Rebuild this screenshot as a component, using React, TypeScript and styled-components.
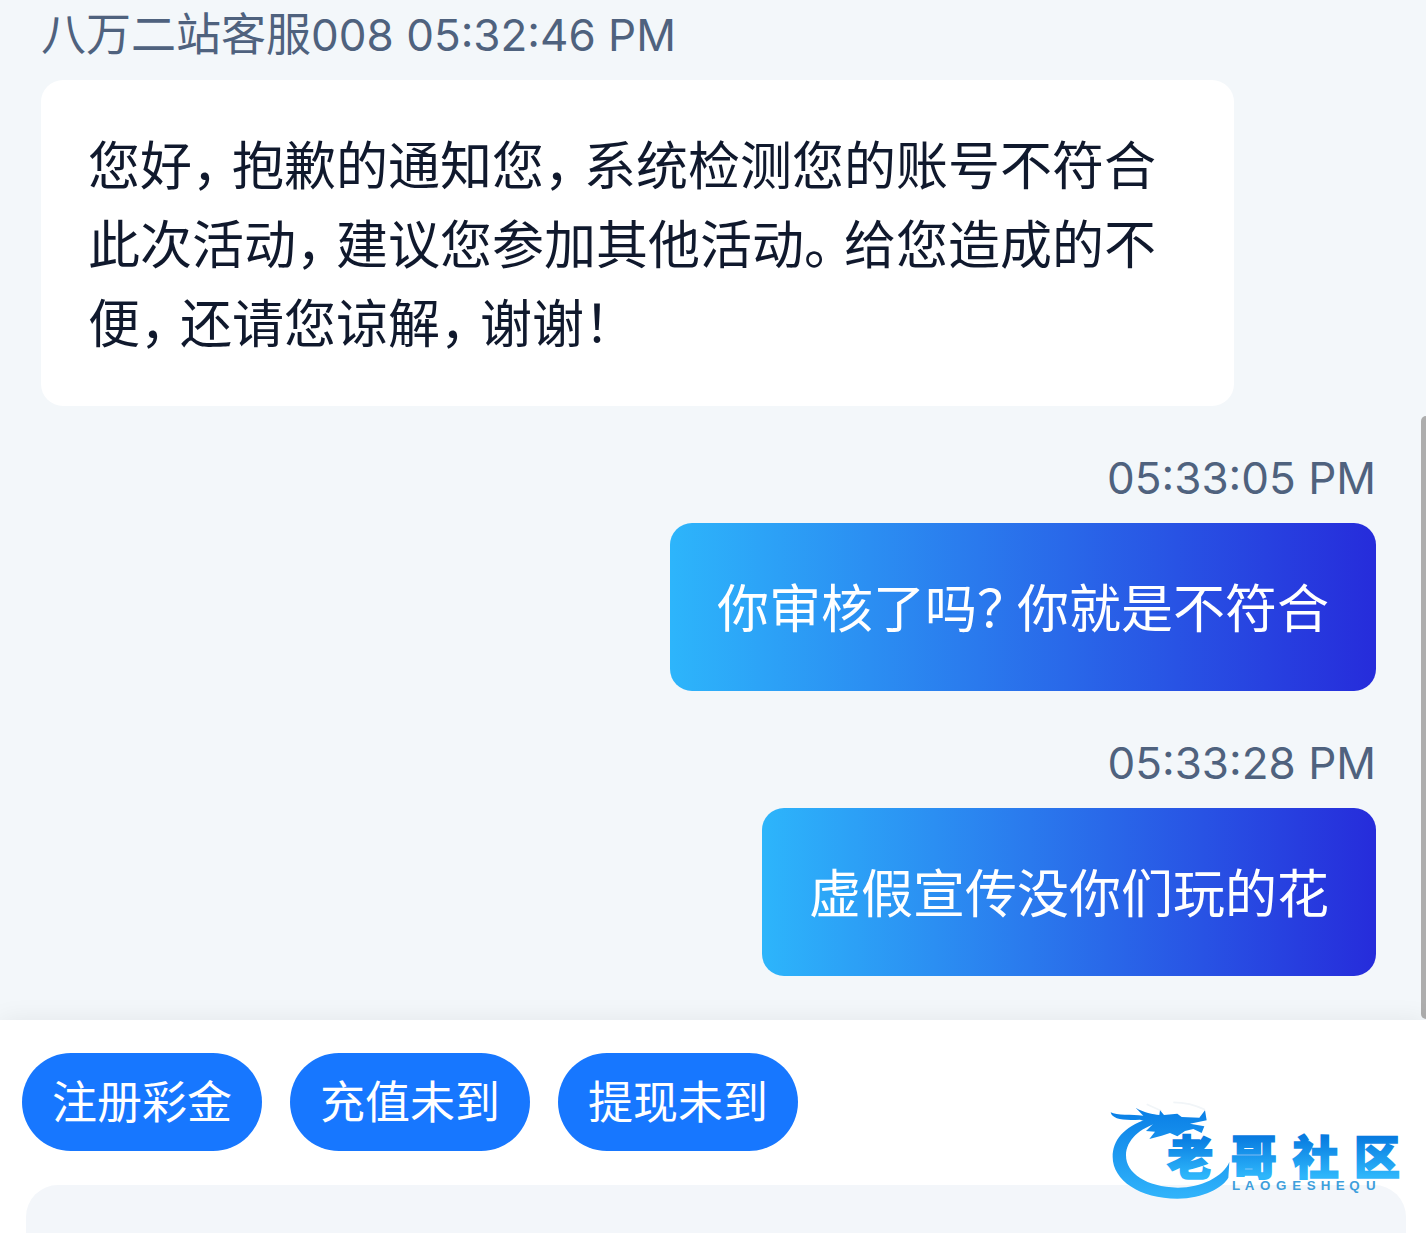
import React from 'react';
import styled, { createGlobalStyle } from 'styled-components';

const GlobalStyle = createGlobalStyle`
  *, *::before, *::after { box-sizing: border-box; }
  body {
    margin: 0;
    background: #f3f7fa;
    font-family: "Noto Sans CJK SC", sans-serif;
  }
`;

const Page = styled.div`
  position: relative;
  display: flex;
  flex-direction: column;
  height: 100vh;
  overflow: hidden;
`;

const Conversation = styled.main`
  position: relative;
  display: flex;
  flex-direction: column;
  flex: none;
  gap: 39px;
  padding: 2px 50px 44px 41px;
  background: #f3f7fa;
`;

const Message = styled.article<{ $own?: boolean }>`
  display: flex;
  flex-direction: column;
  align-items: ${(p) => (p.$own ? 'flex-end' : 'flex-start')};
  gap: 18px;
`;

const Meta = styled.header`
  font-size: 45px;
  line-height: 60px;
  color: #4f627e;
`;

const Latin = styled.span`
  font-family: Inter, sans-serif;
  font-size: 44px;
  line-height: 44px;
`;

const Bubble = styled.p<{ $own?: boolean }>`
  margin: 0;
  max-width: calc(100% - 142px);
  padding: 43px 47px 46px;
  border-radius: 22px;
  font-size: 52px;
  line-height: 79px;
  color: ${(p) => (p.$own ? '#fff' : '#10192d')};
  background: ${(p) => (p.$own ? 'linear-gradient(90deg, #2db5fb, #262cdb)' : '#fff')};
`;

const Mark = styled.span`
  margin-right: 14px;
  font-feature-settings: "halt";
`;

const ScrollThumb = styled.div`
  position: absolute;
  right: 0;
  top: 416px;
  bottom: 1px;
  width: 5px;
  border-radius: 5px 0 0 5px;
  background: #adadad;
`;

const Composer = styled.footer`
  position: relative;
  display: flex;
  flex-direction: column;
  flex: 1;
  min-height: 0;
  gap: 34px;
  padding: 33px 20px 0 22px;
  background: #fff;
  box-shadow: 0 0 24px rgba(0, 0, 0, 0.07);
`;

const QuickReplies = styled.nav`
  display: flex;
  gap: 28px;
`;

const QuickReply = styled.button`
  height: 98px;
  padding: 0 30px 4px;
  border: 0;
  border-radius: 49px;
  background: #1777ff;
  color: #fff;
  font: 400 45px/64px "Noto Sans CJK SC", sans-serif;
`;

const MessageBox = styled.textarea`
  flex: none;
  height: 140px;
  margin-left: 4px;
  padding: 30px;
  border: 0;
  border-radius: 32px;
  outline: 0;
  resize: none;
  background: #f3f6fa;
  font: 400 45px/64px "Noto Sans CJK SC", sans-serif;
`;

const Brand = styled.svg`
  position: absolute;
  right: 21px;
  bottom: 33px;
  width: 295px;
  height: 103px;
`;

function withMarks(text: string) {
  return text
    .split(/([，。？！])/)
    .map((part, i) => (i % 2 ? <Mark key={i}>{part}</Mark> : part));
}

const messages = [
  { name: '八万二站客服', id: '008', time: '05:32:46 PM', text: '您好，抱歉的通知您，系统检测您的账号不符合此次活动，建议您参加其他活动。给您造成的不便，还请您谅解，谢谢！' },
  { own: true, time: '05:33:05 PM', text: '你审核了吗？你就是不符合' },
  { own: true, time: '05:33:28 PM', text: '虚假宣传没你们玩的花' },
];

const replies = ['注册彩金', '充值未到', '提现未到'];

function BrandMark() {
  return (
    <Brand viewBox="60 20 885 309" role="img" aria-label="老哥社区">
      <defs>
        <linearGradient id="ring" gradientUnits="userSpaceOnUse" x1="0" y1="60" x2="0" y2="325">
          <stop offset="0" stopColor="#0a7fe6" />
          <stop offset="1" stopColor="#31b4fb" />
        </linearGradient>
        <linearGradient id="word" gradientUnits="userSpaceOnUse" x1="0" y1="140" x2="0" y2="258">
          <stop offset="0" stopColor="#087be0" />
          <stop offset="1" stopColor="#2eb6fb" />
        </linearGradient>
      </defs>
      <path d="M170 42L215 62M250 36C290 36 320 46 345 58" fill="none" stroke="#f1f5f8" strokeWidth="5" />
      <g fill="url(#ring)">
        <path d="M172 86C100 110 68 150 68 200C68 270 150 325 262 325C340 325 400 290 415 262L418 215C400 260 330 293 262 292C170 290 108 250 108 195C108 150 150 112 205 98Z" />
        <path d="M62 66C80 76 125 72 160 76L137 52C160 66 190 72 208 74L210 60L222 74L262 70L275 80L328 82L345 60L350 90L300 100L343 108L335 128L310 116L285 122L262 138L240 128L215 136L178 146L195 124L168 122L190 100L150 88C100 92 66 86 62 66Z" />
      </g>
      <g fontFamily="'Noto Sans CJK SC', sans-serif" fontWeight="900" fill="url(#word)" stroke="url(#word)" strokeWidth="5">
        <text x="232 422 608 792" y="250" fontSize="138">老哥社区</text>
      </g>
      <text x="426 464 510 558 607 650 692 737 778 828" y="299" fontFamily="'Liberation Sans', sans-serif" fontWeight="700" fontSize="40" fill="#3f9fdc">LAOGESHEQU</text>
    </Brand>
  );
}

export default function App() {
  return (
    <>
      <GlobalStyle />
      <Page>
        <Conversation>
          {messages.map((m) => (
            <Message key={m.time} $own={m.own}>
              <Meta>{m.name}<Latin>{m.id ? `${m.id} ` : ''}<time>{m.time}</time></Latin></Meta>
              <Bubble $own={m.own}>{withMarks(m.text)}</Bubble>
            </Message>
          ))}
          <ScrollThumb />
        </Conversation>
        <Composer>
          <QuickReplies>
            {replies.map((r) => <QuickReply key={r} type="button">{r}</QuickReply>)}
          </QuickReplies>
          <MessageBox aria-label="消息" />
          <BrandMark />
        </Composer>
      </Page>
    </>
  );
}
